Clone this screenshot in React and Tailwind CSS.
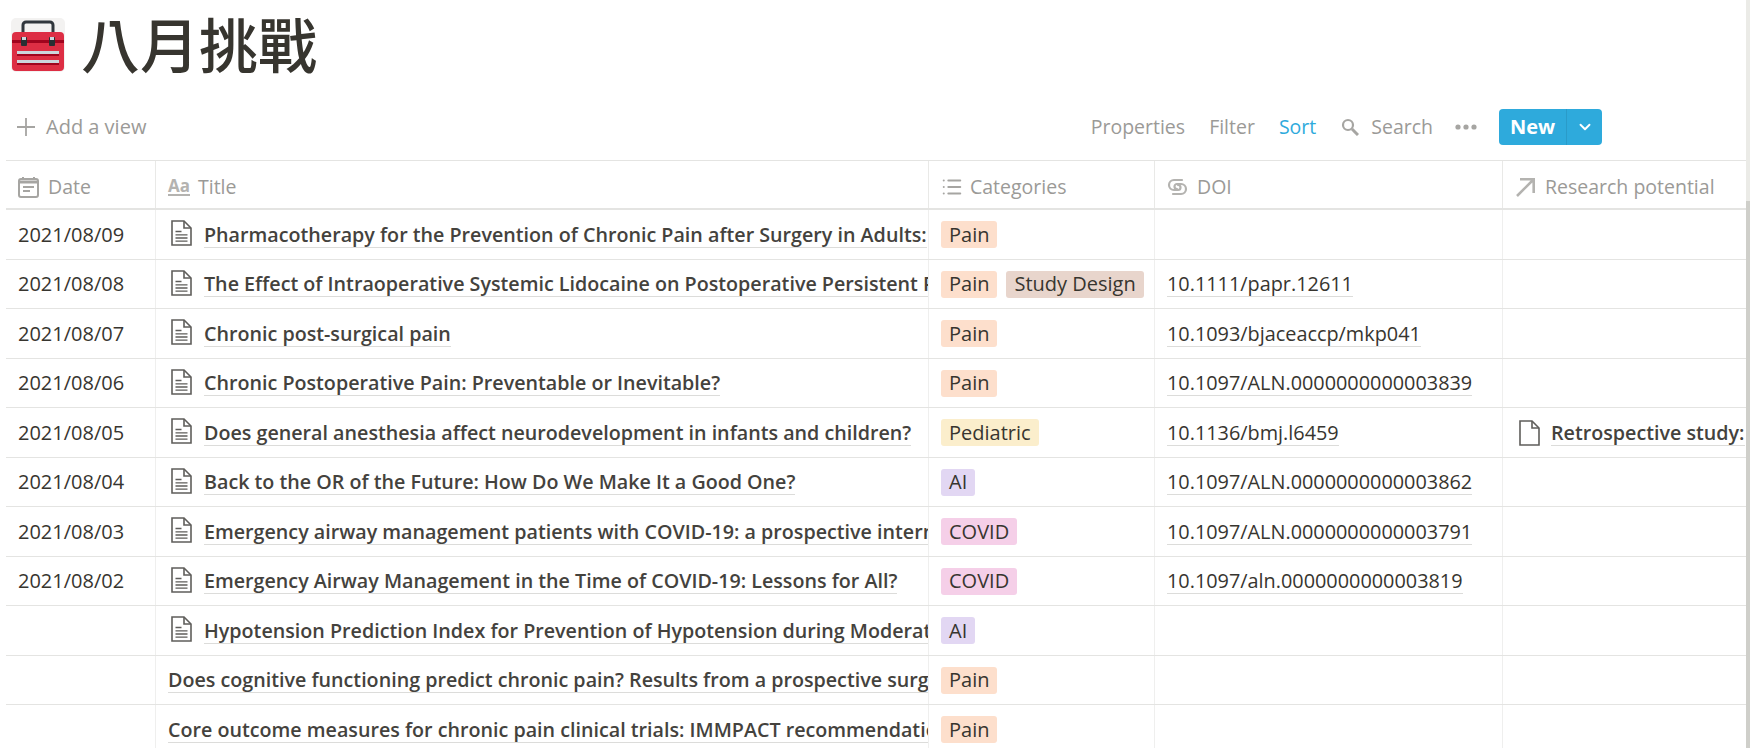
import { ChevronDown, List } from 'lucide-react';

const FONT = '"Open Sans", "Noto Sans CJK TC", sans-serif';

const tagColors = {
  Pain: 'bg-[#fddfcc]',
  'Study Design': 'bg-[#e8d5cc]',
  Pediatric: 'bg-[#fbeecc]',
  AI: 'bg-[#e2d7f3]',
  COVID: 'bg-[#f5cfe8]',
};

const rows = [
  { date: '2021/08/09', title: 'Pharmacotherapy for the Prevention of Chronic Pain after Surgery in Adults:', tags: ['Pain'], doc: true },
  { date: '2021/08/08', title: 'The Effect of Intraoperative Systemic Lidocaine on Postoperative Persistent Pain', tags: ['Pain', 'Study Design'], doi: '10.1111/papr.12611', doc: true },
  { date: '2021/08/07', title: 'Chronic post-surgical pain', tags: ['Pain'], doi: '10.1093/bjaceaccp/mkp041', doc: true },
  { date: '2021/08/06', title: 'Chronic Postoperative Pain: Preventable or Inevitable?', tags: ['Pain'], doi: '10.1097/ALN.0000000000003839', doc: true },
  { date: '2021/08/05', title: 'Does general anesthesia affect neurodevelopment in infants and children?', tags: ['Pediatric'], doi: '10.1136/bmj.l6459', doc: true, research: 'Retrospective study:' },
  { date: '2021/08/04', title: 'Back to the OR of the Future: How Do We Make It a Good One?', tags: ['AI'], doi: '10.1097/ALN.0000000000003862', doc: true },
  { date: '2021/08/03', title: 'Emergency airway management patients with COVID-19: a prospective international', tags: ['COVID'], doi: '10.1097/ALN.0000000000003791', doc: true },
  { date: '2021/08/02', title: 'Emergency Airway Management in the Time of COVID-19: Lessons for All?', tags: ['COVID'], doi: '10.1097/aln.0000000000003819', doc: true },
  { title: 'Hypotension Prediction Index for Prevention of Hypotension during Moderate', tags: ['AI'], doc: true },
  { title: 'Does cognitive functioning predict chronic pain? Results from a prospective surgical', tags: ['Pain'] },
  { title: 'Core outcome measures for chronic pain clinical trials: IMMPACT recommendations', tags: ['Pain'] },
];

function DocIcon({ lines = true }) {
  return (
    <svg width="21" height="26" viewBox="0 0 21 26" fill="none" stroke="#5f5e5b" strokeWidth="1.6" className="shrink-0">
      <path d="M1 1h12l7 7v17H1z" />
      <path d="M13 1v7h7" />
      {lines && <path d="M4.5 11.5h6M4.5 14.8h12M4.5 18h12M4.5 21.2h12" strokeWidth="1.3" />}
    </svg>
  );
}

function HeaderCell({ icon, label, className }) {
  return (
    <div className={`flex items-center pl-[12px] pt-[5px] border-r border-[#e9e9e7] text-[19.5px] text-[#9b9a97] overflow-hidden whitespace-nowrap ${className}`}>
      {icon}
      <span>{label}</span>
    </div>
  );
}

function Row({ row }) {
  return (
    <div className="flex h-[49.5px] border-b border-[#e4e4e2] text-[20px] text-[#37352f]">
      <div className="w-[150px] shrink-0 border-r border-[#efefee] pl-[12px] pt-[1px] flex items-center">{row.date}</div>
      <div className="w-[773px] shrink-0 border-r border-[#efefee] pl-[12px] pt-[1px] flex items-center overflow-hidden whitespace-nowrap">
        {row.doc && <span className="ml-[3px] mr-[12px] -mt-[3px] flex"><DocIcon /></span>}
        <span className="font-semibold text-[19.7px] text-[#44423d] border-b border-[#dcdcda] leading-[25px]">{row.title}</span>
      </div>
      <div className="w-[226px] shrink-0 border-r border-[#efefee] pl-[12px] pt-[1px] flex items-center gap-[9px]">
        {row.tags.map((t) => (
          <span key={t} className={`h-[27px] px-[8px] rounded-[3px] flex items-center whitespace-nowrap ${tagColors[t]}`}>{t}</span>
        ))}
      </div>
      <div className="w-[348px] shrink-0 border-r border-[#efefee] pl-[12px] pt-[1px] flex items-center">
        {row.doi && <span className="text-[19.85px] border-b border-[#dcdcda] leading-[25px]">{row.doi}</span>}
      </div>
      <div className="flex-1 pl-[16px] pt-[1px] flex items-center gap-[11px] overflow-hidden whitespace-nowrap">
        {row.research && <DocIcon lines={false} />}
        {row.research && <span className="font-semibold text-[19.7px] text-[#44423d] border-b border-[#dcdcda] leading-[25px]">{row.research}</span>}
      </div>
    </div>
  );
}

export default function App() {
  return (
    <div className="relative w-[1750px] h-[748px] overflow-hidden bg-white" style={{ fontFamily: FONT }}>
      <div className="flex items-center h-[92px] pl-[11px] pb-[2px]">
        <svg width="54" height="54" viewBox="0 0 54 54" className="shrink-0">
          <rect width="54" height="54" rx="5" fill="#f3f2f1" />
          <path d="M12 17V7a3 3 0 0 1 3-3h24a3 3 0 0 1 3 3v10" fill="none" stroke="#31373d" strokeWidth="3" />
          <rect x="1" y="14" width="52" height="39" rx="4" fill="#dd2e44" />
          <rect x="1" y="22" width="52" height="3" fill="#a0041e" />
          <rect x="10" y="19" width="6" height="9" rx="1" fill="#292f33" />
          <rect x="38" y="19" width="6" height="9" rx="1" fill="#292f33" />
          <rect x="11" y="19" width="4" height="3" fill="#ccd6dd" />
          <rect x="39" y="19" width="4" height="3" fill="#ccd6dd" />
          <rect x="6" y="33" width="42" height="3" fill="#ccd6dd" />
          <rect x="6" y="42" width="42" height="3" fill="#ccd6dd" />
          <rect x="6" y="36" width="42" height="2" fill="#a0041e" />
          <rect x="6" y="45" width="42" height="2" fill="#a0041e" />
        </svg>
        <h1 className="ml-[16px] pt-[1px] text-[59px] leading-none font-medium text-[#37352f]">八月挑戰</h1>
      </div>

      <div className="flex items-center h-[68px] pt-[2px] text-[20px] text-[#9b9a97]">
        <div className="flex items-center pl-[16px]">
          <svg width="20" height="20" viewBox="0 0 20 20" stroke="#a6a5a2" strokeWidth="1.8" className="shrink-0">
            <path d="M10 1v18M1 10h18" />
          </svg>
          <span className="ml-[10px]">Add a view</span>
        </div>
        <div className="flex items-center ml-auto mr-[148px]">
          <span className="text-[19.5px]">Properties</span>
          <span className="ml-[24px] text-[19.5px]">Filter</span>
          <span className="ml-[24px] text-[19.5px] text-[#2eaadc]">Sort</span>
          <svg width="18" height="18" viewBox="0 0 18 18" fill="none" stroke="#a6a5a2" className="ml-[25px] shrink-0">
            <circle cx="7" cy="7" r="5" strokeWidth="2.2" />
            <path d="M11 11l6 6" strokeWidth="3" />
          </svg>
          <span className="ml-[12px] text-[19.5px]">Search</span>
          <svg width="22" height="6" viewBox="0 0 22 6" fill="#a6a5a2" className="ml-[22px] shrink-0">
            <circle cx="3" cy="3" r="2.6" />
            <circle cx="11" cy="3" r="2.6" />
            <circle cx="19" cy="3" r="2.6" />
          </svg>
          <div className="ml-[22px] flex h-[36px] rounded-[4px] bg-[#2eaadc] text-white">
            <span className="w-[68px] flex items-center justify-center font-bold border-r border-[#2a9bc9]">New</span>
            <span className="w-[35px] flex items-center justify-center"><ChevronDown size={18} strokeWidth={2.5} /></span>
          </div>
        </div>
      </div>

      <div className="ml-[6px] border-t border-[#e4e4e2]">
        <div className="flex h-[49px] border-b-2 border-[#e4e4e2]">
          <HeaderCell
            className="w-[150px] shrink-0"
            label="Date"
            icon={
              <svg width="21" height="22" viewBox="0 0 21 22" fill="none" stroke="#a6a5a2" strokeWidth="2" className="shrink-0 mr-[9px]">
                <rect x="1" y="3" width="19" height="18" rx="2" />
                <path d="M1 6h19" strokeWidth="3" />
                <path d="M5 1v2M16 1v2M5 11h11M5 15h7" />
              </svg>
            }
          />
          <HeaderCell
            className="w-[773px] shrink-0"
            label="Title"
            icon={
              <span className="mr-[8px] text-[17px] font-bold leading-[16px] border-b-2 border-[#b4b3b0] text-[#b4b3b0]">Aa</span>
            }
          />
          <HeaderCell className="w-[226px] shrink-0" label="Categories" icon={<List size={22} strokeWidth={2.2} color="#a6a5a2" className="mr-[7px]" />} />
          <HeaderCell
            className="w-[348px] shrink-0"
            label="DOI"
            icon={
              <svg width="21" height="18" viewBox="0 0 21 18" fill="none" stroke="#b4b3b0" strokeWidth="2.2" strokeLinecap="round" className="shrink-0 mr-[9px]">
                <path d="M15 2H7a5 5 0 0 0 0 10h4a2.5 2.5 0 0 0 0-5" />
                <path d="M6 16h8a5 5 0 0 0 0-10h-4a2.5 2.5 0 0 0 0 5" />
              </svg>
            }
          />
          <HeaderCell
            className="flex-1 border-r-0"
            label="Research potential"
            icon={
              <svg width="21" height="21" viewBox="0 0 21 21" fill="none" stroke="#b4b3b0" strokeWidth="2.6" className="shrink-0 mr-[9px]">
                <path d="M2 19L19 2M5 2.3h13.7V16" />
              </svg>
            }
          />
        </div>
        {rows.map((row) => (
          <Row key={row.title} row={row} />
        ))}
      </div>

      <div className="absolute right-0 top-0 bottom-0 w-[4px] bg-[#ebebe7]">
        <div className="mt-[201px] h-full bg-[#cfcfca]" />
      </div>
    </div>
  );
}
